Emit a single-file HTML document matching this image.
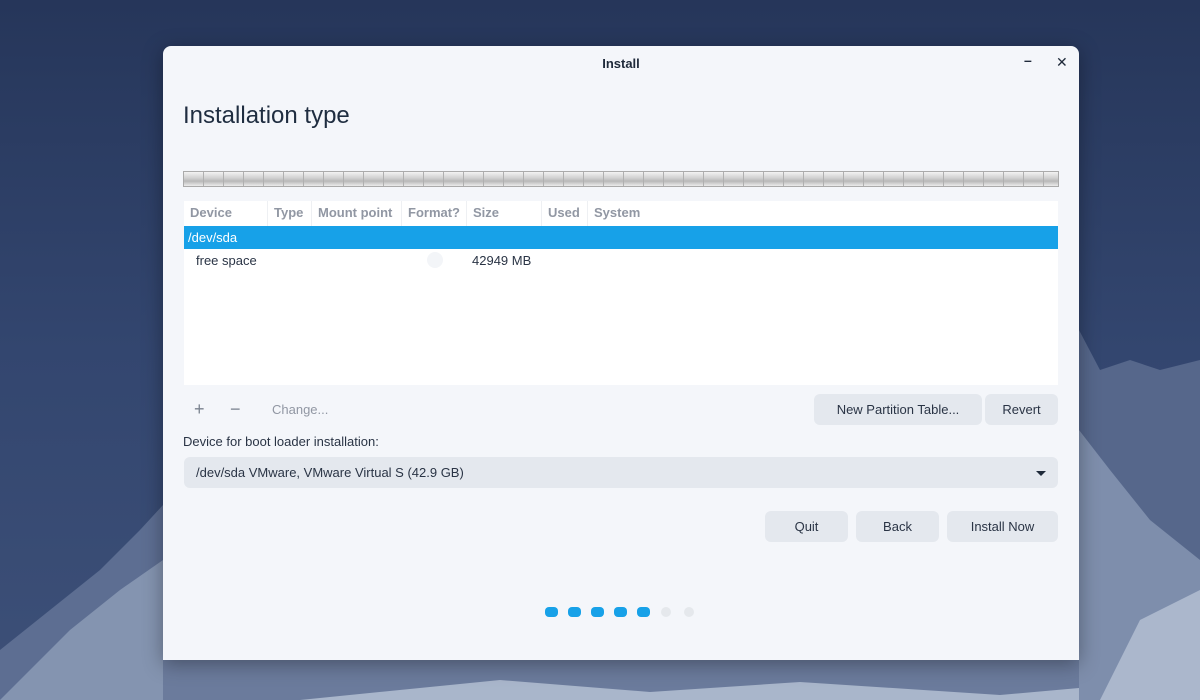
<!DOCTYPE html>
<html><head><meta charset="utf-8"><style>
*{margin:0;padding:0;box-sizing:border-box}
body{width:1200px;height:700px;overflow:hidden;position:relative;font-family:"Liberation Sans","DejaVu Sans",sans-serif;background:linear-gradient(#26365a 0%,#33466f 50%,#3d5078 100%)}
#bg{position:absolute;left:0;top:0}
.win{position:absolute;left:163px;top:46px;width:916px;height:614px;background:#f4f6fa;border-radius:8px 8px 0 0;box-shadow:0 4px 20px rgba(0,0,0,.35);color:#2a3445}
.title{position:absolute;top:10px;width:100%;text-align:center;font-size:13px;font-weight:bold;color:#1f2a3a}
.wc{position:absolute;top:8px;font-size:14px;font-weight:bold;color:#1f2a3a}
h1{position:absolute;left:20px;top:56px;font-size:24px;font-weight:normal;color:#1f2d40}
.bar{position:absolute;left:20px;top:125px;width:876px;height:16px;border:1px solid #aaa;background-image:repeating-linear-gradient(90deg,transparent 0 19px,#b0b0b0 19px 20px),linear-gradient(#f3f3f3,#cfcfcf 45%,#b8b8b8 65%,#ececec)}
.tbl{position:absolute;left:21px;top:155px;width:874px;height:184px;background:#fff}
.th{position:absolute;top:0;height:25px;line-height:23px;font-size:13px;font-weight:bold;color:#9197a3;border-right:1px solid #eef0f3;padding-left:6px}
.sel{position:absolute;left:0;top:25px;width:874px;height:23px;background:#17a1e8;color:#fff;font-size:13px;line-height:23px;padding-left:4px}
.r{position:absolute;top:48px;font-size:13px;line-height:23px}
.btn{position:absolute;height:31px;background:#e4e8ee;border-radius:6px;font-size:13px;line-height:31px;text-align:center;color:#2a3445}
.dot{position:absolute;top:561px;width:13px;height:10px;border-radius:4px;background:#17a1e8}
.dot.o{background:#e5e8ec;width:10px;border-radius:5px}
</style></head><body>
<svg id="bg" width="1200" height="700">
<polygon points="0,650 50,610 100,570 140,530 163,505 163,700 0,700" fill="#5d6e92"/>
<polygon points="20,680 70,630 120,590 163,560 163,700 0,700" fill="#8f9db8" opacity=".8"/>
<polygon points="1079,330 1100,370 1130,360 1160,370 1200,360 1200,700 1079,700" fill="#56678b"/>
<polygon points="1079,430 1110,470 1150,520 1200,560 1200,700 1079,700" fill="#8595b2" opacity=".85"/>
<polygon points="1140,620 1200,590 1200,700 1100,700" fill="#b7c2d5" opacity=".8"/>
<polygon points="163,660 1079,660 1079,700 163,700" fill="#6b7b9c"/>
<polygon points="300,700 500,680 650,692 800,682 1000,695 1079,688 1079,700" fill="#a9b6cb"/>
</svg>
<div class="win">
<div class="title">Install</div>
<div class="wc" style="left:861px;top:6px">–</div>
<div class="wc" style="left:893px">✕</div>
<h1>Installation type</h1>
<div class="bar"></div>
<div class="tbl">
<div class="th" style="left:0;width:84px">Device</div>
<div class="th" style="left:84px;width:44px">Type</div>
<div class="th" style="left:128px;width:90px">Mount point</div>
<div class="th" style="left:218px;width:65px">Format?</div>
<div class="th" style="left:283px;width:75px">Size</div>
<div class="th" style="left:358px;width:46px">Used</div>
<div class="th" style="left:404px;width:100px;border:0">System</div>
<div class="sel">/dev/sda</div>
<div class="r" style="left:12px">free space</div>
<div style="position:absolute;left:243px;top:51px;width:16px;height:16px;border-radius:50%;background:#f3f5f8"></div>
<div class="r" style="left:288px">42949 MB</div>
</div>
<div style="position:absolute;left:31px;top:353px;font-size:18px;color:#7a828f">+</div>
<div style="position:absolute;left:67px;top:353px;font-size:18px;color:#7a828f">−</div>
<div style="position:absolute;left:109px;top:356px;font-size:13px;color:#9197a3">Change...</div>
<div class="btn" style="left:651px;top:348px;width:168px">New Partition Table...</div>
<div class="btn" style="left:822px;top:348px;width:73px">Revert</div>
<div style="position:absolute;left:20px;top:388px;font-size:13px">Device for boot loader installation:</div>
<div class="btn" style="left:21px;top:411px;width:874px;text-align:left;padding-left:12px">/dev/sda VMware, VMware Virtual S (42.9 GB)
<div style="position:absolute;right:12px;top:14px;border-left:5px solid transparent;border-right:5px solid transparent;border-top:5px solid #1f2a3a"></div></div>
<div class="btn" style="left:602px;top:465px;width:83px">Quit</div>
<div class="btn" style="left:693px;top:465px;width:83px">Back</div>
<div class="btn" style="left:784px;top:465px;width:111px">Install Now</div>
<div class="dot" style="left:382px"></div>
<div class="dot" style="left:405px"></div>
<div class="dot" style="left:428px"></div>
<div class="dot" style="left:451px"></div>
<div class="dot" style="left:474px"></div>
<div class="dot o" style="left:498px"></div>
<div class="dot o" style="left:521px"></div>
</div>
</body></html>
